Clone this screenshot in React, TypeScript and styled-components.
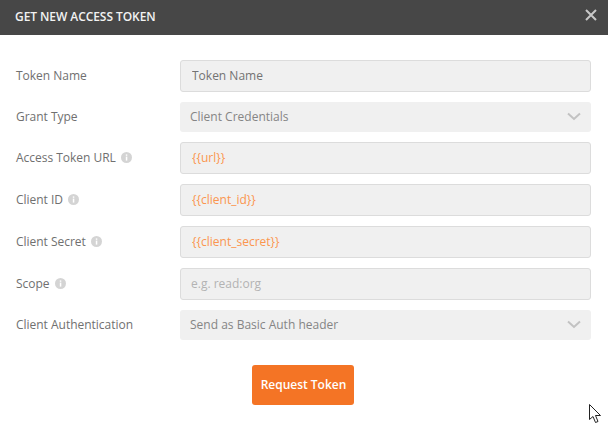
import React from 'react';
import styled, { createGlobalStyle } from 'styled-components';

const GlobalStyle = createGlobalStyle`
  html, body {
    margin: 0;
    padding: 0;
    background: #fff;
    font-family: "Open Sans", "Liberation Sans", sans-serif;
  }
`;

const Modal = styled.div`
  position: relative;
  width: 608px;
  height: 438px;
  overflow: hidden;
  background: #fff;
`;

const Header = styled.header`
  height: 35px;
  background: #474747;
  display: flex;
  align-items: center;
  justify-content: space-between;
  padding: 0 11px 0 15px;
  box-sizing: border-box;
`;

const Title = styled.h1`
  margin: 0 0 2px;
  font-size: 12px;
  font-weight: 600;
  letter-spacing: -0.07px;
  color: #f2f2f2;
`;

const CloseButton = styled.button`
  display: flex;
  margin-bottom: 5px;
  padding: 0;
  border: none;
  background: transparent;
`;

const Form = styled.form`
  display: flex;
  flex-direction: column;
  gap: 10px;
  padding: 25px 17px 0 16px;
`;

const Row = styled.div`
  display: grid;
  grid-template-columns: 164px 411px;
  align-items: center;
`;

const Label = styled.label`
  display: flex;
  align-items: center;
  gap: 5px;
  padding-bottom: 2px;
  font-size: 12px;
  letter-spacing: -0.02px;
  color: #707070;
`;

const Input = styled.input<{ $variable?: boolean }>`
  height: 32px;
  box-sizing: border-box;
  padding: 0 11px 2px;
  border: 1px solid #dcdcdc;
  border-radius: 3px;
  background: #f0f0f0;
  outline: none;
  font-family: inherit;
  font-size: 12px;
  color: ${(p) => (p.$variable ? '#fb964f' : '#737373')};

  &::placeholder {
    color: #b3b3b3;
    opacity: 1;
  }

  &:placeholder-shown {
    padding-left: 10px;
  }
`;

const Select = styled.div`
  height: 30px;
  box-sizing: border-box;
  display: flex;
  align-items: center;
  justify-content: space-between;
  padding: 0 10px 2px;
  border-radius: 3px;
  background: #f0f0f0;
  font-size: 12px;
  color: #858585;
`;

const Footer = styled.div`
  display: flex;
  padding: 25px 0 0 252px;
`;

const SubmitButton = styled.button`
  width: 102px;
  height: 40px;
  padding: 0 0 2px 1px;
  border: none;
  border-radius: 3px;
  background: #f47425;
  color: #fff;
  font-family: inherit;
  font-size: 12px;
  font-weight: 600;
  letter-spacing: -0.02px;
`;

const Cursor = styled.svg`
  position: absolute;
  left: 589px;
  top: 404px;
`;

const InfoIcon = () => (
  <svg width="11" height="11" viewBox="0 0 11 11">
    <circle cx="5.5" cy="5.5" r="5.5" fill="#d4d4d4" />
    <rect x="4.8" y="4.6" width="1.5" height="4" fill="#fff" />
    <rect x="4.8" y="2.4" width="1.5" height="1.4" fill="#fff" />
  </svg>
);

const Chevron = () => (
  <svg width="14" height="9" viewBox="0 0 14 9" fill="none">
    <path d="M1 1.5 L7 7 L13 1.5" stroke="#c2c2c2" strokeWidth="2" />
  </svg>
);

const App: React.FC = () => {
  return (
    <Modal>
      <GlobalStyle />
      <Header>
        <Title>GET NEW ACCESS TOKEN</Title>
        <CloseButton type="button">
          <svg width="12" height="12" viewBox="0 0 12 12" fill="none">
            <path d="M1 1 L11 11 M11 1 L1 11" stroke="#c8c8c8" strokeWidth="2" />
          </svg>
        </CloseButton>
      </Header>
      <Form>
        <Row>
          <Label>Token Name</Label>
          <Input defaultValue="Token Name" />
        </Row>
        <Row>
          <Label>Grant Type</Label>
          <Select>
            Client Credentials
            <Chevron />
          </Select>
        </Row>
        <Row>
          <Label>
            Access Token URL <InfoIcon />
          </Label>
          <Input $variable defaultValue="{{url}}" />
        </Row>
        <Row>
          <Label>
            Client ID <InfoIcon />
          </Label>
          <Input $variable defaultValue="{{client_id}}" />
        </Row>
        <Row>
          <Label>
            Client Secret <InfoIcon />
          </Label>
          <Input $variable defaultValue="{{client_secret}}" />
        </Row>
        <Row>
          <Label>
            Scope <InfoIcon />
          </Label>
          <Input placeholder="e.g. read:org" />
        </Row>
        <Row>
          <Label>Client Authentication</Label>
          <Select>
            Send as Basic Auth header
            <Chevron />
          </Select>
        </Row>
      </Form>
      <Footer>
        <SubmitButton type="button">Request Token</SubmitButton>
      </Footer>
      <Cursor width="13" height="20" viewBox="0 0 13 20">
        <path
          d="M0.5 0.5 L0.5 15.5 L4 12.5 L6.5 18.5 L9 17.5 L6.5 11.5 L11.5 11.5 Z"
          fill="#fff"
          stroke="#222"
          strokeWidth="1"
        />
      </Cursor>
    </Modal>
  );
};

export default App;
